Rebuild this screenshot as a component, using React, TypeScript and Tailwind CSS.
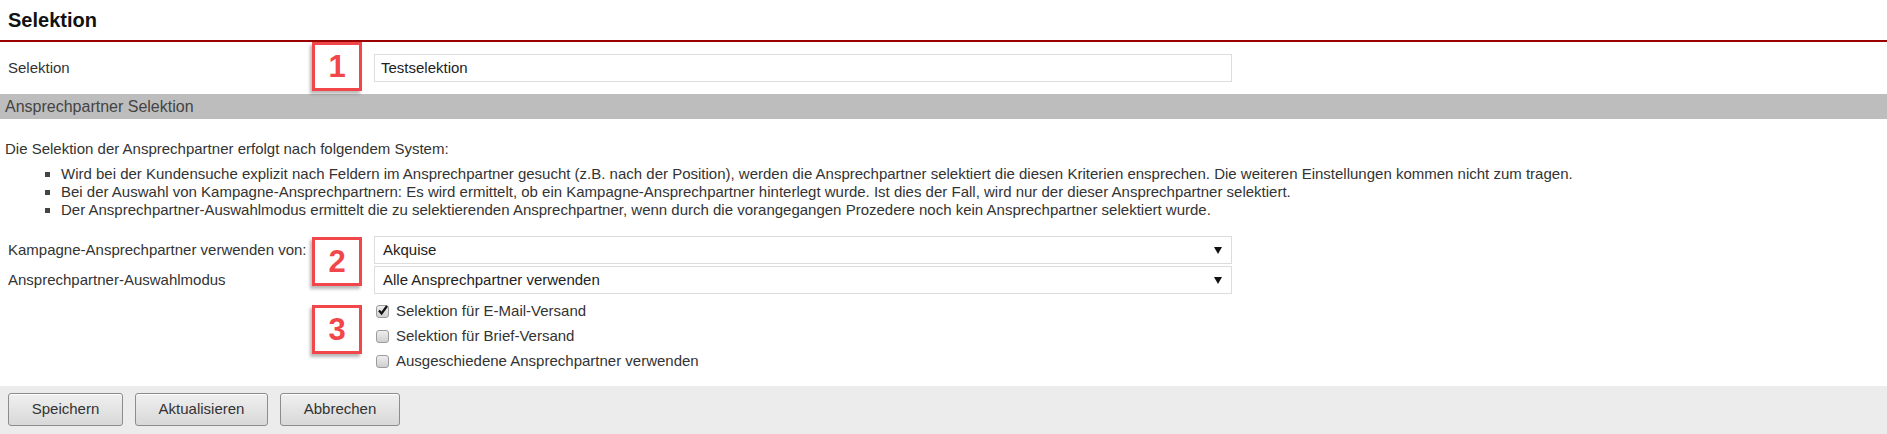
const BULLETS = [
  "Wird bei der Kundensuche explizit nach Feldern im Ansprechpartner gesucht (z.B. nach der Position), werden die Ansprechpartner selektiert die diesen Kriterien ensprechen. Die weiteren Einstellungen kommen nicht zum tragen.",
  "Bei der Auswahl von Kampagne-Ansprechpartnern: Es wird ermittelt, ob ein Kampagne-Ansprechpartner hinterlegt wurde. Ist dies der Fall, wird nur der dieser Ansprechpartner selektiert.",
  "Der Ansprechpartner-Auswahlmodus ermittelt die zu selektierenden Ansprechpartner, wenn durch die vorangegangen Prozedere noch kein Ansprechpartner selektiert wurde.",
];

const CHECKS = [
  { label: "Selektion für E-Mail-Versand", checked: true },
  { label: "Selektion für Brief-Versand", checked: false },
  { label: "Ausgeschiedene Ansprechpartner verwenden", checked: false },
];

/** Red numbered annotation box laid over the form. */
function Badge({ n, className }: { n: number; className: string }) {
  return (
    <div
      className={`absolute flex h-[49px] w-[50px] items-center justify-center border-[3px] border-[#f2474a] bg-white text-[31px] font-bold leading-none text-[#f2474a] shadow-[-2px_3px_3px_rgba(0,0,0,0.28)] ${className}`}
    >
      {n}
    </div>
  );
}

function SelectBox({ value }: { value: string }) {
  return (
    <div className="flex h-[28px] w-[858px] items-center justify-between border border-[#dcdcdc] bg-white pl-[8px] pr-[8px] text-[#222]">
      <span>{value}</span>
      <svg width="8" height="7" viewBox="0 0 8 7" className="mr-[1px]">
        <polygon points="0,0 8,0 4,7" fill="#111" />
      </svg>
    </div>
  );
}

function Checkbox({ checked }: { checked: boolean }) {
  return (
    <span className="relative inline-block h-[13px] w-[13px] shrink-0 rounded-[3px] border border-[#9c9c9c] bg-gradient-to-b from-[#eeeeee] to-[#cfcfcf]">
      {checked && (
        <svg width="12" height="12" viewBox="0 0 12 12" className="absolute left-[0px] top-[-2px]">
          <path d="M2 6.5 L4.6 9.5 L10 2" fill="none" stroke="#111" strokeWidth="2.2" />
        </svg>
      )}
    </span>
  );
}

function Button({ label, width }: { label: string; width: string }) {
  return (
    <button
      className={`h-[33px] ${width} rounded-[3px] border border-[#8c8c8c] bg-gradient-to-b from-[#f0f0f0] to-[#d8d8d8] text-[15px] text-[#333] shadow-[inset_0_1px_0_#fff]`}
    >
      {label}
    </button>
  );
}

export default function App() {
  return (
    <div className="relative min-h-[434px] w-full bg-white text-[15px] text-[#333]" style={{ fontFamily: '"Liberation Sans", Arial, sans-serif' }}>
      {/* Page title */}
      <div className="flex h-[40px] items-center pl-[8px] text-[20px] font-bold text-[#111]">Selektion</div>
      <div className="h-[2px] bg-[#990000]" />

      <div className="flex items-center py-[12px]">
        <div className="w-[374px] pl-[8px]">Selektion</div>
        <div className="flex h-[28px] w-[858px] items-center border border-[#dcdcdc] pl-[6px] text-[#222]">Testselektion</div>
      </div>

      <div className="h-[25px] bg-[#bebdbe] pl-[5px] text-[16px] leading-[25px] text-[#444]">Ansprechpartner Selektion</div>

      <p className="pl-[5px] pt-[21px] leading-[18px]">Die Selektion der Ansprechpartner erfolgt nach folgendem System:</p>
      <ul className="pt-[7px] leading-[18px]">
        {BULLETS.map((b) => (
          <li key={b} className="flex items-center">
            <span className="ml-[45px] mr-[11px] h-[5px] w-[5px] shrink-0 bg-[#444]" />
            {b}
          </li>
        ))}
      </ul>

      <div className="flex flex-col gap-[2px] pt-[17px]">
        <div className="flex items-center">
          <div className="w-[374px] pl-[8px]">Kampagne-Ansprechpartner verwenden von:</div>
          <SelectBox value="Akquise" />
        </div>
        <div className="flex items-center">
          <div className="w-[374px] pl-[8px]">Ansprechpartner-Auswahlmodus</div>
          <SelectBox value="Alle Ansprechpartner verwenden" />
        </div>
      </div>

      <div className="pb-[12px] pl-[376px] pt-[5px]">
        {CHECKS.map((c) => (
          <label key={c.label} className="flex h-[25px] items-center gap-[7px]">
            <Checkbox checked={c.checked} />
            <span>{c.label}</span>
          </label>
        ))}
      </div>

      {/* Action bar */}
      <div className="flex h-[48px] gap-[12px] bg-[#ececec] pl-[8px] pt-[7px]">
        <Button label="Speichern" width="w-[115px]" />
        <Button label="Aktualisieren" width="w-[133px]" />
        <Button label="Abbrechen" width="w-[120px]" />
      </div>

      <Badge n={1} className="left-[312px] top-[42px]" />
      <Badge n={2} className="left-[312px] top-[237px]" />
      <Badge n={3} className="left-[312px] top-[305px]" />
    </div>
  );
}
